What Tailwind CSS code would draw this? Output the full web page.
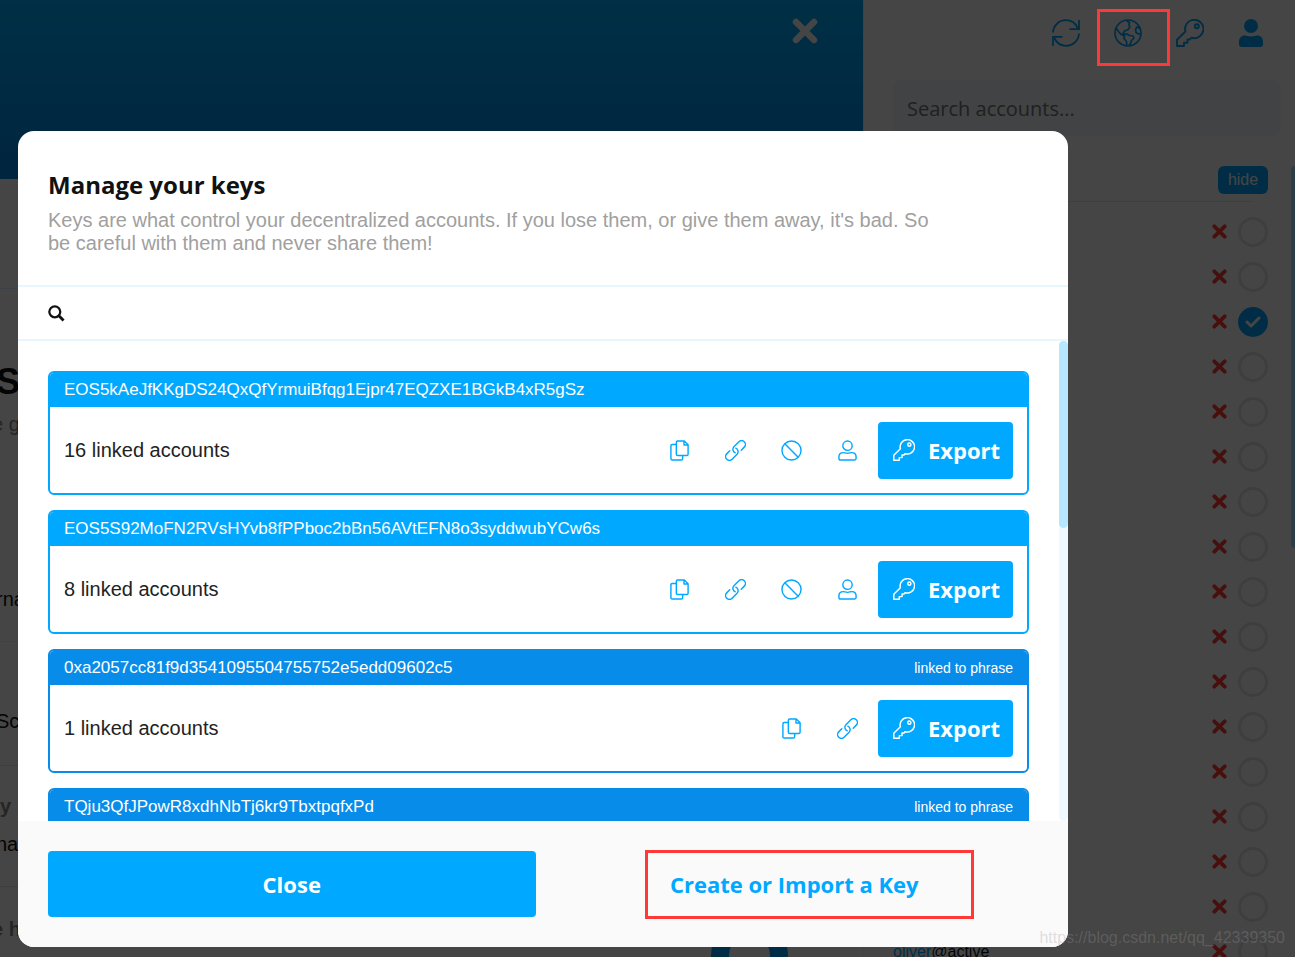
<!DOCTYPE html>
<html lang="en">
<head>
    <meta charset="UTF-8">
    <meta name="viewport" content="width=device-width, initial-scale=1.0">
    <script src="https://cdn.jsdelivr.net/npm/@tailwindcss/browser@4"></script>
    <title>Manage your keys</title>
</head>
<body class="relative h-screen overflow-hidden bg-white font-['Liberation_Sans',Arial,sans-serif] text-[#111]">
    <!-- Icons -->
    <svg class="hidden">
        <symbol id="i-refresh" viewBox="0 0 28 28" fill="none" stroke="currentColor" stroke-width="1.8">
            <path d="M1 13.5C1.3 6.5 7 1.2 14 1.2c5.2 0 9.300 2.800 11.700 7.800M27 1v9.200h-9.500M27 14.500C26.700 21.500 21 26.800 14 26.800c-5.200 0-9.300-2.800-11.700-7.800M1 27v-9.200h9.500"/>
        </symbol>
        <symbol id="i-globe" viewBox="0 0 28 28" fill="none" stroke="currentColor" stroke-width="1.7" stroke-linejoin="round">
            <circle cx="14" cy="14" r="13"/>
            <path d="M12.500 1.500l3 2.200-.8 2.300 1.300 1.500-1.800 3-3.700 1.500-1.500 2.500 1.500.8 2.500-.3 2.500 1.500 3.700.5.8 2-2.500 2.500-1 3-1.500 2M2 9l2.500 3.500 2 2.500 4 2-.5 2.500 2.500 3 .3 4M26 9.500l-3-1.500-1.500 2.500.5 3 2.500 1.500 2.300-.5"/>
        </symbol>
        <symbol id="i-key" viewBox="0 0 28 28" fill="none" stroke="currentColor" stroke-width="1.9" stroke-linejoin="round">
            <path d="M9.400 12.500A9.200 9.200 0 1 1 15.300 18.700L14 20.500h-2.500v3.200H8V27H1v-6.200z"/>
            <circle cx="20.800" cy="7.200" r="2"/>
        </symbol>
        <symbol id="i-user-solid" viewBox="0 0 26 28" fill="currentColor">
            <circle cx="13" cy="7" r="7"/>
            <path d="M7 16.500c2 0 3 1 6 1s4-1 6-1c4 0 6 2.500 6 6.500v2.500c0 1.500-1 2.500-2.500 2.500h-19C2 28 1 27 1 25.500V23c0-4 2-6.500 6-6.500z"/>
        </symbol>
        <symbol id="i-x" viewBox="0 0 26 26" fill="none" stroke="currentColor" stroke-width="6.500" stroke-linecap="round">
            <path d="M4 4l18 18M22 4L4 22"/>
        </symbol>
        <symbol id="i-check" viewBox="0 0 16 12" fill="none" stroke="currentColor" stroke-width="3" stroke-linecap="round" stroke-linejoin="round">
            <path d="M2 6l4 4 8-8"/>
        </symbol>
        <symbol id="i-search" viewBox="0 0 18 18" fill="none" stroke="currentColor" stroke-width="2.400">
            <circle cx="7.200" cy="7.200" r="5.800"/>
            <path d="M11.500 11.500l5 5" stroke-width="3"/>
        </symbol>
        <symbol id="i-copy" viewBox="0 0 20 22" fill="none" stroke="currentColor" stroke-width="1.500" stroke-linejoin="round">
            <path d="M8 1h7l4 4v10c0 .8-.5 1.300-1.300 1.300H8c-.8 0-1.300-.5-1.300-1.300V2.300C6.700 1.500 7.200 1 8 1zM14.700 1.200v4h4M6.700 4.800H2.300C1.500 4.800 1 5.300 1 6.100v13.600c0 .8.500 1.300 1.300 1.300h9.700c.8 0 1.300-.5 1.300-1.300v-3.400"/>
        </symbol>
        <symbol id="i-link" viewBox="0 0 22 22" fill="none" stroke="currentColor" stroke-width="1.500" stroke-linecap="round">
            <g transform="rotate(-45 11 11)">
                <path d="M6.500 7H2a4 4 0 0 0 0 8h7.300a4 4 0 0 0 3.600-5.500"/>
                <path d="M15.500 15H20a4 4 0 0 0 0-8h-7.300a4 4 0 0 0-3.600 5.500"/>
            </g>
        </symbol>
        <symbol id="i-ban" viewBox="0 0 22 22" fill="none" stroke="currentColor" stroke-width="1.500">
            <circle cx="11" cy="11" r="10"/>
            <path d="M4 4l14 14"/>
        </symbol>
        <symbol id="i-user" viewBox="0 0 20 22" fill="none" stroke="currentColor" stroke-width="1.500" stroke-linejoin="round">
            <circle cx="10" cy="6" r="4.900"/>
            <path d="M5.500 13.200c1.700 0 2.200.8 4.500.8s2.800-.8 4.500-.8c3 0 4.500 1.800 4.500 4.500v1.800c0 .9-.6 1.500-1.500 1.500h-15C1.600 21 1 20.400 1 19.500v-1.800c0-2.700 1.500-4.500 4.500-4.500z"/>
        </symbol>
    </svg>

    <!-- Page behind the dialog -->
    <div class="flex h-full">
        <main class="relative flex-1 overflow-hidden">
            <div class="h-[179px] bg-linear-to-b from-[#00b0ff] to-[#0089e6]"></div>
            <button aria-label="Close window" class="absolute top-[18px] right-[45px] text-white"><svg class="size-[26px]"><use href="#i-x"/></svg></button>
            <div class="h-[110px] border-b border-[#e0f0ff]"></div>
            <h2 class="-ml-1 pt-[73px] text-4xl leading-10 font-bold">S</h2>
            <p class="-ml-2 pt-2 text-xl leading-7 text-[#888]">e g</p>
            <p class="-ml-1 h-[204px] border-b border-[#e0f0ff] pt-[147px] text-xl leading-7">rna</p>
            <p class="-ml-1 h-[124px] border-b border-gray-200 pt-[65px] text-xl leading-7">Sc</p>
            <h3 class="pt-[26px] text-xl leading-7 font-bold text-[#888]">y</h3>
            <p class="-ml-1 h-[67px] border-b border-gray-200 pt-[10px] text-xl leading-7">na</p>
            <h3 class="-ml-2 pt-[28px] text-xl leading-7 font-bold text-[#888]">e h</h3>
            <div class="absolute right-[75px] -bottom-[37px] size-[77px] rounded-full border-[18px] border-[#00a8ff]"></div>
        </main>

        <aside class="flex w-[432px] shrink-0 flex-col border-l border-gray-100 pl-[29px]">
            <div class="flex h-20 shrink-0 items-center justify-end gap-[34px] pr-[31px] pb-[14px] text-[#00a8ff]">
                <button aria-label="Refresh"><svg class="size-7"><use href="#i-refresh"/></svg></button>
                <button aria-label="Networks"><svg class="size-7"><use href="#i-globe"/></svg></button>
                <button aria-label="Keys"><svg class="size-7"><use href="#i-key"/></svg></button>
                <button aria-label="Profile"><svg class="h-7 w-[26px]"><use href="#i-user-solid"/></svg></button>
            </div>
            <input type="text" aria-label="Search accounts" placeholder="Search accounts..." class="mr-[14px] h-14 shrink-0 rounded-lg bg-[#f3f6fb] px-[14px] font-['Open_Sans','Noto_Sans',sans-serif] text-xl placeholder:text-[#777]">
            <div class="relative mt-[30px] flex-1">
                <div class="absolute top-0 right-0 h-[382px] w-1 rounded-l bg-[#a6e0ff]"></div>
                <div class="mr-[42px] flex h-9 justify-end border-b border-gray-200">
                    <button class="-mr-[15px] h-7 w-[50px] rounded-md bg-[#00a8ff] text-base text-white">hide</button>
                </div>
                <div id="account-rows" class="pt-[7px] pr-[27px]"></div>
                <p class="absolute top-[774px] left-0 text-base leading-6"><span class="text-[#00a8ff]">oliver</span>@active</p>
            </div>
        </aside>
    </div>

    <!-- Dialog -->
    <div class="absolute inset-0 flex bg-black/73 pt-[131px] pr-[227px] pb-[10px] pl-[18px]">
        <section role="dialog" aria-labelledby="dialog-title" class="flex min-w-0 flex-1 flex-col overflow-hidden rounded-2xl bg-white">
            <header class="h-[154px] shrink-0 px-[30px] pt-9">
                <h1 id="dialog-title" class="font-['Open_Sans','Noto_Sans',sans-serif] text-2xl leading-9 font-bold">Manage your keys</h1>
                <p class="mt-[6px] max-w-[895px] text-[20px] leading-[23px] text-[#a0a0a0]">Keys are what control your decentralized accounts. If you lose them, or give them away, it's bad. So be careful with them and never share them!</p>
            </header>
            <div class="flex h-[56px] shrink-0 items-center gap-3 border-y-2 border-[#e8f7ff] px-[30px]">
                <label for="key-search" aria-label="Search keys"><svg class="size-[17px]"><use href="#i-search"/></svg></label>
                <input id="key-search" type="text" class="h-full flex-1 outline-none">
            </div>
            <div class="flex min-h-0 flex-1">
                <div id="keys-list" class="flex flex-1 flex-col gap-[15px] overflow-hidden p-[30px]"></div>
                <div class="w-[9px] rounded-full bg-[#f0f9ff]">
                    <div class="h-[187px] rounded-full bg-[#b6e7ff]"></div>
                </div>
            </div>
            <footer class="grid shrink-0 grid-cols-2 gap-[15px] bg-[#fafafa] p-[30px] font-['Open_Sans','Noto_Sans',sans-serif] text-[22px] font-bold">
                <button class="h-[66px] rounded bg-[#00a8ff] text-white">Close</button>
                <button class="h-[66px] rounded text-[#00a8ff]">Create or Import a Key</button>
            </footer>
        </section>
    </div>

    <!-- Highlights -->
    <div class="pointer-events-none absolute top-[9px] right-[125px] h-[57px] w-[73px] border-3 border-[#ff3838]"></div>
    <div class="pointer-events-none absolute right-[321px] bottom-[38px] h-[69px] w-[329px] border-3 border-[#ff3838]"></div>
    <p class="absolute right-[10px] bottom-[7px] text-base leading-6 text-[#999]/30">https://blog.csdn.net/qq_42339350</p>

    <script>
        const keys = [
            { name: 'EOS5kAeJfKKgDS24QxQfYrmuiBfqg1Ejpr47EQZXE1BGkB4xR5gSz', accounts: 16, phrase: false },
            { name: 'EOS5S92MoFN2RVsHYvb8fPPboc2bBn56AVtEFN8o3syddwubYCw6s', accounts: 8, phrase: false },
            { name: '0xa2057cc81f9d3541095504755752e5edd09602c5', accounts: 1, phrase: true },
            { name: 'TQju3QfJPowR8xdhNbTj6kr9TbxtpqfxPd', accounts: 1, phrase: true },
        ];

        function iconButton(icon, label) {
            return `<button aria-label="${label}" class="flex h-14 w-14 items-center justify-center"><svg class="size-[21px]"><use href="#${icon}"/></svg></button>`;
        }

        document.getElementById('keys-list').innerHTML = keys.map(key => `
            <article class="shrink-0 overflow-hidden rounded-md border-2 ${key.phrase ? 'border-[#088cea]' : 'border-[#00a8ff]'}">
                <div class="flex h-[34px] items-center justify-between px-[14px] text-white ${key.phrase ? 'bg-[#088cea]' : 'bg-[#00a8ff]'}">
                    <h2 class="text-[17px] leading-8">${key.name}</h2>
                    ${key.phrase ? '<span class="text-sm leading-8">linked to phrase</span>' : ''}
                </div>
                <div class="flex h-[86px] items-center px-[14px] text-[#00a8ff]">
                    <p class="flex-1 text-[20px] text-[#222]">${key.accounts} linked accounts</p>
                    ${iconButton('i-copy', 'Copy')}
                    ${iconButton('i-link', 'Links')}
                    ${key.phrase ? '' : iconButton('i-ban', 'Block') + iconButton('i-user', 'Accounts')}
                    <button class="ml-[3px] flex h-[57px] w-[135px] items-center gap-[13px] rounded bg-[#00a8ff] pl-[15px] font-['Open_Sans','Noto_Sans',sans-serif] text-[22px] font-bold text-white">
                        <svg class="size-[22px]"><use href="#i-key"/></svg>Export
                    </button>
                </div>
            </article>
        `).join('');

        let rows = '';
        for (let i = 0; i < 17; i++) {
            const selected = i === 2;
            rows += `
                <div class="flex h-[45px] items-center justify-end gap-[11px]">
                    <button aria-label="Remove account" class="text-[#ff3b30]"><svg class="size-[15px]"><use href="#i-x"/></svg></button>
                    <button aria-label="Select account" class="flex size-[30px] items-center justify-center rounded-full ${selected ? 'bg-[#00a8ff] text-white' : 'border-3 border-[#e4e4e4]'}">
                        ${selected ? '<svg class="h-3 w-4"><use href="#i-check"/></svg>' : ''}
                    </button>
                </div>
            `;
        }
        document.getElementById('account-rows').innerHTML = rows;
    </script>
</body>
</html>
